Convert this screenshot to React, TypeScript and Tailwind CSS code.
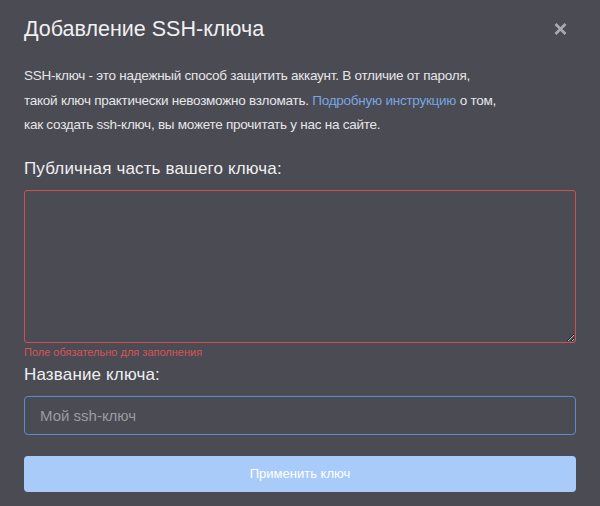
export default function App() {
  return (
    <div
      className="w-[600px] h-[506px] bg-[#4a4b53] text-[#ececee] overflow-hidden relative"
      style={{ fontFamily: '"Liberation Sans", Arial, sans-serif' }}
    >
      <div className="px-6 pt-[14px]">
        <div className="flex items-center justify-between h-[30px]">
          <h2 className="text-[21.5px] leading-[30px] text-[#f0f0f2]">Добавление SSH-ключа</h2>
          <button className="w-[20px] h-[20px] flex items-center justify-center mr-[6px] text-[#a9a9b0]">
            <svg width="13" height="12" viewBox="0 0 13 12" fill="none" stroke="currentColor" strokeWidth="2.6" strokeLinecap="butt">
              <path d="M1.5 1L11.5 11M11.5 1L1.5 11" />
            </svg>
          </button>
        </div>
        <p className="mt-[20px] text-[13.5px] leading-[24.5px] tracking-[-0.25px] text-[#e6e6e9]">
          SSH-ключ - это надежный способ защитить аккаунт. В отличие от пароля,
          <br />
          такой ключ практически невозможно взломать.{" "}
          <a className="text-[#79a6e0]">Подробную инструкцию</a> о том,
          <br />
          как создать ssh-ключ, вы можете прочитать у нас на сайте.
        </p>
        <label className="block mt-[19px] text-[17px] leading-[24px] tracking-[0.15px] text-[#efeff1]">
          Публичная часть вашего ключа:
        </label>
        <textarea className="block mt-[9px] w-full h-[153px] bg-transparent border border-[#cf4f53] rounded-[3px] outline-none resize-y" />
        <div className="mt-[2px] text-[11px] leading-[14px] text-[#d9535a]">Поле обязательно для заполнения</div>
        <label className="block mt-[4px] text-[17px] leading-[24px] tracking-[0.15px] text-[#efeff1]">Название ключа:</label>
        <input
          className="block mt-[9px] w-full h-[39px] bg-transparent border border-[#5b8ccc] rounded-[4px] px-[15px] text-[15px] outline-none placeholder:text-[#9c9ca3]"
          placeholder="Мой ssh-ключ"
        />
        <button className="mt-[21px] w-full h-[36px] rounded-[4px] bg-[#a9cbfa] text-white text-[13px]">
          Применить ключ
        </button>
      </div>
    </div>
  );
}
